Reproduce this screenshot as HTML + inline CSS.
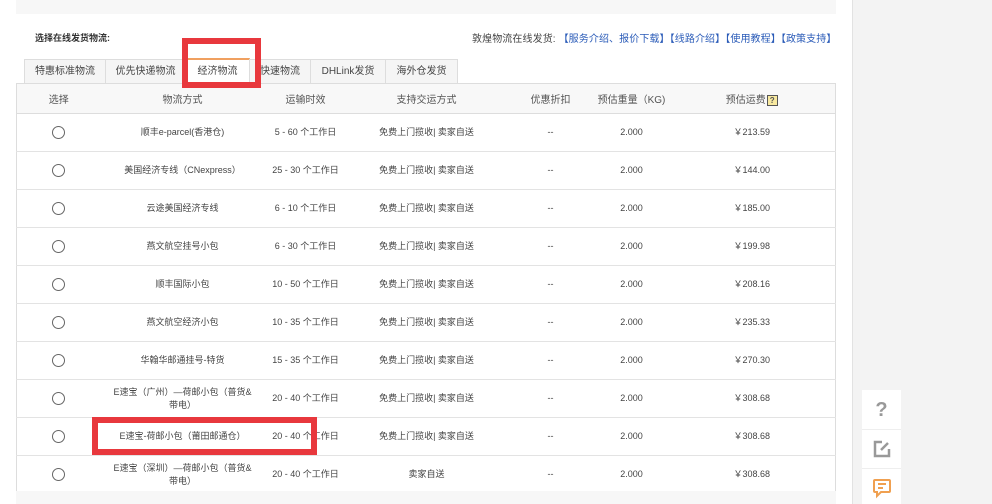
<!DOCTYPE html><html><head><meta charset="utf-8"><style>
*{margin:0;padding:0;box-sizing:border-box}
body{width:992px;height:504px;overflow:hidden;background:#fff;font-family:"Liberation Sans","Noto Sans CJK SC",sans-serif;font-size:10px;color:#333;position:relative}
.abs{position:absolute}
.topband{left:16px;top:0;width:820px;height:14px;background:#f7f7f7}
.right{left:852px;top:0;width:140px;height:504px;background:#f3f3f3;border-left:1px solid #e2e2e2}
.bot{left:16px;top:491px;width:820px;height:13px;background:#f7f7f7}
.tab{top:59px;height:24px;border:1px solid #ddd;border-bottom:none;background:#f5f5f5;text-align:center;line-height:23px;font-size:10px;color:#444}
.tab.act{background:#fff;border-top:2px solid #f0a060;height:25px}
table{position:absolute;left:16px;top:83px;width:820px;border-collapse:collapse;border:1px solid #ddd}
th{height:30px;background:#f8f8f8;font-weight:normal;font-size:10px;color:#555;border-bottom:1px solid #ddd;border-top:1px solid #ddd}
td{height:38px;text-align:center;border-bottom:1px solid #e3e3e3;font-size:9px;color:#444;line-height:13px}
.r{display:inline-block;width:13px;height:13px;border:1px solid #666;border-radius:50%;vertical-align:middle}
.red{border:6px solid #e8383d}
.sb{left:862px;width:39px;background:#fff;border-bottom:1px solid #eee;text-align:center}
a{color:#2a5bb8;text-decoration:none}
</style></head><body>
<div class="abs topband"></div>
<div class="abs right"></div>
<div class="abs" style="left:35px;top:31px;font-size:9px;font-weight:bold;color:#333">选择在线发货物流:</div>
<div class="abs" style="left:472px;top:30px;font-size:10px;color:#444;letter-spacing:0.1px">敦煌物流在线发货: <a>【服务介绍、报价下载】【线路介绍】【使用教程】【政策支持】</a></div>
<div class="abs tab" style="left:24px;width:82px">特惠标准物流</div>
<div class="abs tab" style="left:105px;width:81px">优先快递物流</div>
<div class="abs tab act" style="left:185px;width:65px;top:58px">经济物流</div>
<div class="abs tab" style="left:249px;width:62px">快速物流</div>
<div class="abs tab" style="left:310px;width:76px">DHLink发货</div>
<div class="abs tab" style="left:385px;width:73px">海外仓发货</div>
<table>
<tr><th style="width:84px">选择</th><th style="width:164px">物流方式</th><th style="width:82px">运输时效</th><th style="width:160px">支持交运方式</th><th style="width:88px">优惠折扣</th><th style="width:74px">预估重量（KG)</th><th>预估运费<span style="display:inline-block;width:11px;height:11px;border:1px solid #555;background:#f8e9a0;font-size:8px;line-height:9px;font-weight:bold;margin-left:1px">?</span></th></tr>
<tr><td><span class="r"></span></td><td>顺丰e-parcel(香港仓)</td><td>5 - 60 个工作日</td><td>免费上门揽收| 卖家自送</td><td>--</td><td>2.000</td><td>￥213.59</td></tr>
<tr><td><span class="r"></span></td><td>美国经济专线（CNexpress）</td><td>25 - 30 个工作日</td><td>免费上门揽收| 卖家自送</td><td>--</td><td>2.000</td><td>￥144.00</td></tr>
<tr><td><span class="r"></span></td><td>云途美国经济专线</td><td>6 - 10 个工作日</td><td>免费上门揽收| 卖家自送</td><td>--</td><td>2.000</td><td>￥185.00</td></tr>
<tr><td><span class="r"></span></td><td>燕文航空挂号小包</td><td>6 - 30 个工作日</td><td>免费上门揽收| 卖家自送</td><td>--</td><td>2.000</td><td>￥199.98</td></tr>
<tr><td><span class="r"></span></td><td>顺丰国际小包</td><td>10 - 50 个工作日</td><td>免费上门揽收| 卖家自送</td><td>--</td><td>2.000</td><td>￥208.16</td></tr>
<tr><td><span class="r"></span></td><td>燕文航空经济小包</td><td>10 - 35 个工作日</td><td>免费上门揽收| 卖家自送</td><td>--</td><td>2.000</td><td>￥235.33</td></tr>
<tr><td><span class="r"></span></td><td>华翰华邮通挂号-特货</td><td>15 - 35 个工作日</td><td>免费上门揽收| 卖家自送</td><td>--</td><td>2.000</td><td>￥270.30</td></tr>
<tr><td><span class="r"></span></td><td>E速宝（广州）—荷邮小包（普货&amp;<br>带电）</td><td>20 - 40 个工作日</td><td>免费上门揽收| 卖家自送</td><td>--</td><td>2.000</td><td>￥308.68</td></tr>
<tr><td><span class="r"></span></td><td>E速宝-荷邮小包（莆田邮通仓）</td><td>20 - 40 个工作日</td><td>免费上门揽收| 卖家自送</td><td>--</td><td>2.000</td><td>￥308.68</td></tr>
<tr><td><span class="r"></span></td><td>E速宝（深圳）—荷邮小包（普货&amp;<br>带电）</td><td>20 - 40 个工作日</td><td>卖家自送</td><td>--</td><td>2.000</td><td>￥308.68</td></tr>
</table>
<div class="abs bot"></div>
<div class="abs red" style="left:182px;top:38px;width:79px;height:50px"></div>
<div class="abs red" style="left:92px;top:417px;width:225px;height:38px"></div>
<div class="abs sb" style="top:390px;height:40px;font-size:20px;line-height:40px;color:#999;font-weight:bold">?</div>
<div class="abs sb" style="top:430px;height:39px"><svg width="20" height="20" viewBox="0 0 20 20" style="margin-top:9px"><path d="M10 3H3v14h14v-7" fill="none" stroke="#999" stroke-width="2.5"/><path d="M9 11l7-7" stroke="#999" stroke-width="2.5"/></svg></div>
<div class="abs sb" style="top:469px;height:35px;border:none"><svg width="20" height="22" viewBox="0 0 20 22" style="margin-top:9px"><path d="M3 2h14a1 1 0 0 1 1 1v10a1 1 0 0 1-1 1H9l-4 4v-4H3a1 1 0 0 1-1-1V3a1 1 0 0 1 1-1z" fill="none" stroke="#f0a050" stroke-width="2"/><path d="M6 6h8M6 10h5" stroke="#f0a050" stroke-width="2"/></svg></div>
</body></html>
